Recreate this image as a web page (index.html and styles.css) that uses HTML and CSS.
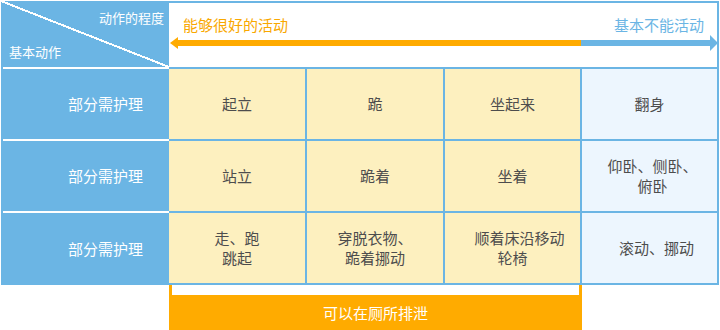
FILE: index.html
```html
<!DOCTYPE html>
<html lang="zh">
<head>
<meta charset="utf-8">
<link rel="stylesheet" href="styles.css">
</head>
<body>
<div class="chart">
  <div class="head">
    <div class="corner">
      <span class="corner-top">动作的程度</span>
      <span class="corner-bottom">基本动作</span>
    </div>
    <div class="scale">
      <div class="scale-labels">
        <span class="good">能够很好的活动</span>
        <span class="poor">基本不能活动</span>
      </div>
      <svg class="scale-arrow" width="548" height="16" viewBox="0 0 548 16">
        <polygon points="1,8 9,2 9,14" fill="#ffab00"/>
        <rect x="9" y="5" width="403" height="6" fill="#ffab00"/>
        <rect x="412" y="5" width="129" height="6" fill="#6bb5e4"/>
        <polygon points="541,0 549,8 541,16" fill="#6bb5e4"/>
      </svg>
    </div>
  </div>

  <div class="row">
    <div class="label">部分需护理</div>
    <div class="cells">
      <div class="cell yellow">起立</div>
      <div class="cell yellow">跪</div>
      <div class="cell yellow">坐起来</div>
      <div class="cell pale">翻身</div>
    </div>
  </div>

  <div class="row">
    <div class="label">部分需护理</div>
    <div class="cells">
      <div class="cell yellow">站立</div>
      <div class="cell yellow">跪着</div>
      <div class="cell yellow">坐着</div>
      <div class="cell pale"><span class="shift-sm">仰卧、侧卧、<br>俯卧</span></div>
    </div>
  </div>

  <div class="row last">
    <div class="label">部分需护理</div>
    <div class="cells">
      <div class="cell yellow">走、跑<br>跳起</div>
      <div class="cell yellow">穿脱衣物、<br>跪着挪动</div>
      <div class="cell yellow"><span><span class="shift">顺着床沿移动</span><br>轮椅</span></div>
      <div class="cell pale"><span class="shift">滚动、挪动</span></div>
    </div>
  </div>

  <div class="bracket"></div>
  <div class="toilet">可以在厕所排泄</div>
</div>
</body>
</html>
```

FILE: styles.css
```css
* { box-sizing: border-box; }

html, body {
  margin: 0;
  padding: 0;
  background: #fff;
}

body {
  font-family: "Noto Sans CJK SC", "Noto Sans", sans-serif;
  overflow: hidden;
}

.chart {
  width: 718px;
  margin: 1px 0 0 1px;
}

.head {
  display: flex;
  height: 66px;
}

.corner {
  width: 168px;
  flex: none;
  display: flex;
  flex-direction: column;
  justify-content: space-between;
  padding: 8px 5px 6px 8px;
  color: #fff;
  font-size: 13px;
  line-height: 18px;
  background: linear-gradient(to top right,
    #6bb5e4 calc(50% - 1px), #fff calc(50% - 1px),
    #fff calc(50% + 1px), #6bb5e4 calc(50% + 1px));
}

.corner-top { text-align: right; }
.corner-bottom { text-align: left; }

.scale {
  flex: 1;
  border-top: 2px solid #6bb5e4;
  border-right: 2px solid #6bb5e4;
  background: #fff;
}

.scale-labels {
  display: flex;
  justify-content: space-between;
  padding: 12px 13px 0 14px;
  font-size: 15px;
  line-height: 20px;
}

.good { color: #f9a800; }
.poor { color: #6bb5e4; }

.scale-arrow {
  display: block;
  overflow: visible;
}

.row {
  display: flex;
  height: 72px;
}

.row.last { height: 74px; }

.label {
  width: 168px;
  flex: none;
  display: flex;
  align-items: center;
  justify-content: flex-end;
  padding: 0 26px 0 0;
  color: #fff;
  font-size: 15px;
  background: linear-gradient(#fff, #fff) 2px 0 / 166px 2px no-repeat, #6bb5e4;
}

.cells {
  flex: 1;
  display: grid;
  grid-template-columns: 136px 136px 135px 135px;
  column-gap: 2px;
  padding: 2px 2px 0 0;
  background: #6bb5e4;
}

.row.last .cells { padding-bottom: 2px; }

.cell {
  display: flex;
  align-items: center;
  justify-content: center;
  text-align: center;
  color: #4d4d4d;
  font-size: 15px;
  line-height: 20px;
  padding-bottom: 1px;
}

.shift { display: inline-block; padding-left: 14px; }
.shift-sm { display: inline-block; padding-left: 6px; }

.yellow { background: #fdf0bf; }
.pale { background: #edf6fe; }

.bracket {
  margin-left: 168px;
  width: 413px;
  height: 10px;
  border-left: 3px solid #ffab00;
  border-right: 3px solid #ffab00;
}

.toilet {
  margin-left: 168px;
  width: 413px;
  height: 35px;
  background: #ffab00;
  color: #fff;
  font-size: 15px;
  line-height: 35px;
  text-align: center;
}
```
